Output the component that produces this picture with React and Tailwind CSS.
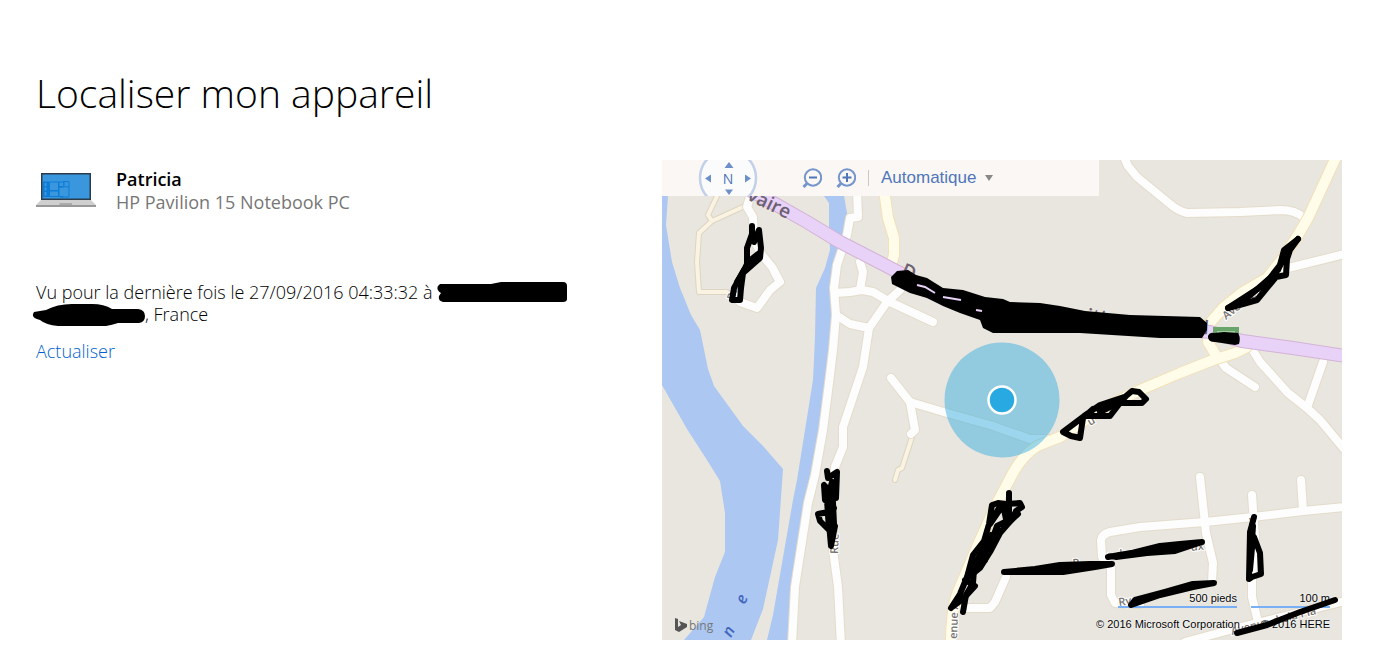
import { useState } from 'react';

const WHITE_ROADS = [
  'M857 190 L858 217 L850 218 L847 235 L837 265 L834 288 L836 315 L833 350 L829 383 L823 430 L815 475 L808 503 L795 587 L792 645',
  'M860 262 L863 272 L860 290',
  'M835 293 L850 292 L862 290 L873 292 L890 302 L933 322',
  'M900 290 L887 302 L869 328',
  'M836 315 L850 324 L869 328 L863 367 L852 400 L843 427 L843 447 L835 467 L832 500 L833 550 L838 587 L841 645',
  'M752 190 L747 207 L753 217 L754 240 L762 255 L772 267 L780 282 L770 290 L757 308 L740 302 L734 296',
  'M1123 155 L1128 166 L1137 177 L1170 204 Q1178 211 1187 213 L1240 212 L1280 210 Q1296 210 1304 218',
  'M1284 269 L1345 254',
  'M1252 349 L1260 362 L1288 393 L1307 408 L1320 420 L1345 450',
  'M1307 408 L1323 362',
  'M1220 360 L1226 368 L1255 387',
  'M891 378 L910 402 L947 413 L990 425 L1030 439 L1056 439',
  'M910 402 L915 430 L911 434',
  'M1140 604 L1115 603 L1111 595 L1111 567 L1102 557 L1101 540 Q1102 534 1110 532 L1140 527 L1205 522 L1253 517 L1303 511 L1345 507',
  'M1200 477 L1206 533 L1213 563 L1212 582',
  'M1252 495 L1255 537 L1252 580 L1252 597 L1258 622',
  'M1301 480 L1303 510',
  'M1185 642 L1237 628 L1345 601',
  'M963 608 L990 608 L995 602 L1006 577',
];

const LANES = [
  'M720 190 L708 215 L712 221 L745 206',
  'M712 221 L699 233 L697 262 L699 292 L727 292',
  'M912 437 L902 468 L898 470 L895 480',
];

const YELLOW_ROADS = [
  'M879 155 L888 218 L894 238 L894 255 L891 266',
  'M1337 155 L1320 192 L1308 218 L1298 235 L1283 258 L1267 278 L1243 292 L1223 308 L1210 323 L1208 342 L1217 357',
  'M1247 347 L1235 353 L1213 360 L1180 373 L1140 390 L1100 410 L1060 437 L1037 446 Q1023 455 1013 473 L997 503 L980 540 L960 587 Q951 604 951 645',
];

const MOTORWAY =
  'M735 182 L777 205 L807 222 L840 242 L873 259 L900 273 L930 292 L985 313 L1100 322 L1210 332 L1242 341 L1293 348 L1345 356';

// marker strokes drawn over the street names
const MARKS = [
  'M752 226 L752 234 L747 248 L747 264 L742 274 L734 288 L732 300 L740 300 L741 288 L743 273 L760 258 L761 248 L759 230 L754 242',
  'M748 262 L758 254 M744 270 L737 282',
  'M1298 239 L1284 250 L1280 265 L1270 278 L1247 298 L1228 308',
  'M1298 239 L1290 250 L1287 259 L1286 275 L1276 277 L1266 289 L1257 300 L1243 304 L1228 308 L1262 286 L1278 270 L1285 254',
  'M1083 417 L1063 432 L1071 436 L1080 438 L1083 418 L1093 409 L1120 403 L1126 396 L1132 391 L1139 392 L1146 399 L1142 403 L1120 403 L1110 416 L1084 416 L1100 405 L1124 397',
  'M1100 412 L1114 405',
  'M827 471 L828 478 L837 472 L836 498 L824 485 L825 500 L834 508 L830 522 L835 526 L831 546 L828 512 L818 514 L820 521 L829 530 L827 500 L832 482 L834 524',
  'M1009 493 L1009 520 L997 526 L992 540 L984 557 L974 570 L973 583 L966 595 L963 612',
  'M951 608 L960 594 L967 577 L973 555 L984 541 L989 524 L992 505 L998 503 L1006 504 L1020 503 L1022 507 L1016 511 L1013 518 L1000 533 L990 552 L980 568 L965 580 L975 586 L964 598 L952 607',
  'M1000 506 L990 524 L1003 505 L1007 524 L1018 514 M991 535 L976 562 L970 576 M998 530 L978 558 M987 545 L985 560',
  'M1108 557 L1160 548 L1202 542 L1175 551 L1147 553 L1116 557 L1160 546 L1180 544 L1202 542',
  'M1254 517 L1250 532 L1249 579 L1252 577 L1261 574 L1260 553 L1254 537 L1252 548 L1250 570 L1253 526',
  'M1237 633 L1267 625 L1300 612 L1335 600',
];

const Redaction = ({ d, viewBox, className }) => (
  <svg viewBox={viewBox} className={className} aria-hidden="true">
    <path d={d} fill="#000" />
  </svg>
);

const Laptop = () => (
  <svg viewBox="0 0 60 35" className="h-[35px] w-[60px] shrink-0" aria-hidden="true">
    <path d="M5 0h50v27H5z" fill="#2b3d4c" />
    <path d="M6.500 1.500h47v24h-47z" fill="#3a96dd" />
    <path d="M7 8.500h20.500V24H7z" fill="#0d7cd6" />
    <path d="M8.500 10h2v3h-2zM8.500 14.500h2v3h-2zM8.500 19h2v3.500h-2zM14 9.500h8V17h-8zM14 18.500h8V23h-8zM23.500 9.500h3.500V13h-3.500zM28.500 9.500h4V13h-4zM23.500 14.500H32V23h-8.500z" fill="#3a96dd" />
    <path d="M27 8.500h6V24h-9M28 9v4M23 13.800h10" stroke="#0d7cd6" fill="none" />
    <path d="M5 27h50l5 5H0z" fill="#cfcfcf" />
    <path d="M24 30h12v2H23z" fill="#aaa" />
    <path d="M0 32h60v2H0z" fill="#999" />
  </svg>
);

const Compass = () => (
  <svg viewBox="0 0 60 36" className="h-9 w-[60px]" aria-hidden="true">
    <circle cx="30" cy="18" r="28" fill="#fcfbfb" stroke="#c2d0ea" strokeWidth="2.500" />
    <path d="M31 2l4.500 6h-9zM31 35l-4-5.500h8zM7 18.500l6-4v8zM53 18.500l-6-4v8z" fill="#6d8fca" />
    <text x="30" y="24" textAnchor="middle" fontSize="14" fontFamily="'Open Sans', sans-serif" fill="#4c72b8">N</text>
  </svg>
);

const ZoomIcon = ({ plus }) => (
  <svg viewBox="0 0 20 20" className="size-5" fill="none" stroke="#7596cc" strokeWidth="2" aria-hidden="true">
    <circle cx="11" cy="9.500" r="8.200" />
    <path d="M5 15.500L1.500 19" strokeWidth="3" />
    <path d={plus ? 'M6.500 9.500h9M11 5v9' : 'M7 9.500h8'} stroke="#4f76ba" />
  </svg>
);

const Roads = ({ paths, casing, fill, width }) => (
  <g fill="none" strokeLinecap="round" strokeLinejoin="round">
    {paths.map((d) => (
      <path key={d} d={d} stroke={casing} strokeWidth={width + 2} />
    ))}
    {paths.map((d) => (
      <path key={d} d={d} stroke={fill} strokeWidth={width} />
    ))}
  </g>
);

const StreetMap = () => (
  <svg viewBox="662 160 680 480" preserveAspectRatio="xMidYMid slice" className="absolute inset-0 size-full" role="img" aria-label="Carte">
    <path d="M662 160h680v480H662z" fill="#e8e6df" />
    <g fill="#abc7f2">
      <path d="M662 160H672L668 196L666 225L672 262L680 288L691 315L700 330L708 369L714 386L743 426L763 446L783 469L778 540L763 609L751 640H684L704 617L715 577L725 552V513L720 481L707 460L687 429L662 385z" />
      <path d="M820 160L824 196L829 203V232L830 250L825 268L816 288L815 337L813 380L797 480L793 500L773 615L767 640H788L791 593L803 523L811 480L820 433L828 360L831 333L832 282L836 258L845 235L847 213L843 190V160z" />
    </g>
    <Roads paths={LANES} casing="#ddd5c3" fill="#faf3e2" width={4} />
    <Roads paths={WHITE_ROADS} casing="#e4dccb" fill="#fdfdfd" width={8} />
    <Roads paths={YELLOW_ROADS} casing="#f2e1b8" fill="#fffdea" width={10} />
    <Roads paths={[MOTORWAY]} casing="#d3b3d5" fill="#e8d2f8" width={12} />

    <g fontFamily="'Open Sans', sans-serif" fill="#77736f" stroke="#fff" strokeWidth="2" paintOrder="stroke" fontSize="11" fontWeight="600">
      <g fontSize="19" fill="#6c6072" stroke="none">
        <text transform="translate(746 199) rotate(26)">vaire</text>
        <text transform="translate(900 275) rotate(23)">D</text>
        <text transform="translate(1087 322) rotate(5)">itt</text>
        <text transform="translate(1203 334) rotate(5)">l</text>
      </g>
      <text transform="translate(734 301) rotate(-72)">Ru</text>
      <text transform="translate(838 554) rotate(-88)">Rue</text>
      <text transform="translate(1226 320) rotate(-38)">Avenue d</text>
      <text transform="translate(1090 426) rotate(-30)">u</text>
      <text transform="translate(957 639) rotate(-88)">enue A</text>
      <text transform="translate(1073 567) rotate(-6)">R</text>
      <text transform="translate(1107 559) rotate(-6)">e des</text>
      <text transform="translate(1191 551) rotate(-6)">ux</text>
      <text transform="translate(1119 606) rotate(-8)">Ry</text>
      <text transform="translate(1249 524)">y</text>
      <text transform="translate(1232 635) rotate(-14)">Avenue de la Pla</text>
    </g>
    <g fontFamily="'Open Sans', sans-serif" fontStyle="italic" fontWeight="600" fontSize="16" fill="#4366bd">
      <text transform="translate(745 605) rotate(-68)">e</text>
      <text transform="translate(731 638) rotate(-62)">n</text>
    </g>

    <rect x="1213" y="327" width="26" height="13" fill="#69a56b" />
    <path d="M1217 332h18" stroke="#d9ecd9" />

    <circle cx="1002" cy="400" r="57.500" fill="#3cb0e0" fillOpacity="0.500" />
    <circle cx="1002" cy="400" r="13.500" fill="#29a9e2" stroke="#fff" strokeWidth="2.500" />

    <g aria-hidden="true">
      <path d="M675 618l3 1v8l3-2-2-4 8 3v3l-8 5-4-2z" fill="#555" />
      <text x="689" y="630" fontSize="12" fontFamily="'Open Sans', sans-serif" fill="#777">bing</text>
    </g>
  </svg>
);

const MarkerLayer = () => (
  <svg viewBox="662 160 680 480" preserveAspectRatio="xMidYMid slice" className="pointer-events-none absolute inset-0 size-full" aria-hidden="true">
    <path d="M891 277L897 271L908 270L916 275L927 278L943 288L963 290L985 297L1003 299L1010 302L1040 303L1060 306L1085 311L1130 315L1200 317L1207 323V330L1202 338H1160L1080 333H993L983 328L980 320L960 313L943 306L927 298L910 293L900 288L892 284z" />
    <path d="M917 285l8 2 10 6M943 297l18 3M976 310l6 1" stroke="#e8d2f8" strokeWidth="2" fill="none" />
    <path d="M1208 336q2-4 6-3l10-1 14 1q3 5 1 11l-4 1-20-3q-7 0-7-5z" />
    <g fill="none" stroke="#000" strokeWidth="6" strokeLinecap="round" strokeLinejoin="round">
      {MARKS.map((d) => (
        <path key={d} d={d} />
      ))}
      <path d="M1004 572L1035 569L1060 565L1090 564L1112 564L1095 567L1063 572z" fill="#000" />
      <path d="M1131 605L1135 600L1165 592L1193 584L1214 583L1193 587L1160 595z" fill="#000" />
    </g>
  </svg>
);

const MapToolbar = () => {
  const [view, setView] = useState('auto');

  return (
    <div className="absolute left-0 top-0 flex h-9 w-[437px] items-center bg-[#faf7f5] pl-9">
      <button type="button" aria-label="Nord" className="h-9">
        <Compass />
      </button>
      <div className="ml-11 flex items-center gap-[14px]">
        <button type="button" aria-label="Zoom arrière"><ZoomIcon /></button>
        <button type="button" aria-label="Zoom avant"><ZoomIcon plus /></button>
      </div>
      <span className="ml-3 h-4 w-px bg-[#c8c8c8]" />
      <div className="ml-3 flex items-center gap-2">
        <select
          aria-label="Affichage"
          value={view}
          onChange={(e) => setView(e.target.value)}
          className="h-9 appearance-none bg-transparent font-['Liberation_Sans',sans-serif] text-[17px] leading-9 text-[#4f76ba]"
        >
          <option value="auto">Automatique</option>
        </select>
        <svg viewBox="0 0 8 6" className="h-[6px] w-2" aria-hidden="true">
          <path d="M0 0h8L4 6z" fill="#888" />
        </svg>
      </div>
    </div>
  );
};

const MapLegend = () => (
  <div className="absolute bottom-2 right-3 w-[234px] font-['Liberation_Sans',sans-serif] text-[11px] leading-4 text-black [text-shadow:0_0_1px_#fff,0_0_2px_#fff]">
    <div className="flex justify-end gap-[14px] text-right">
      <div className="w-[119px] border-b-2 border-[#78aff5]">500 pieds</div>
      <div className="w-[79px] border-b-2 border-[#78aff5]">100 m</div>
    </div>
    <div className="mt-2 flex justify-between whitespace-nowrap">
      <span>© 2016 Microsoft Corporation</span>
      <span>© 2016 HERE</span>
    </div>
  </div>
);

const App = () => {
  return (
    <main className="bg-white pb-3 pl-9 pr-[45px] pt-[66px] font-['Open_Sans',sans-serif] text-[18px] leading-[22px] text-black">
      <h1 className="text-[39px] font-light leading-[54px]">Localiser mon appareil</h1>

      <div className="mt-10 grid grid-cols-[626fr_680fr]">
        <section>
          <div className="flex gap-5 pt-2">
            <div className="pt-[5px]">
              <Laptop />
            </div>
            <div className="leading-[23px]">
              <h2 className="font-semibold">Patricia</h2>
              <p className="text-[#777]">HP Pavilion 15 Notebook PC</p>
            </div>
          </div>

          <p className="mt-[67px] whitespace-nowrap font-light">
            Vu pour la dernière fois le 27/09/2016 04:33:32 à{' '}
            <Redaction
              viewBox="0 0 130 22"
              className="-my-1 inline-block h-[22px] w-[130px] align-baseline"
              d="M3 3L54 3L64 1H126Q130 1 130 5V18Q130 21 126 21H6Q1 20 2 15L4 12Q-1 9 1 5z"
            />
            <br />
            <Redaction
              viewBox="0 0 113 24"
              className="-mb-[6px] -ml-1 -mt-1 inline-block h-6 w-[113px] align-baseline"
              d="M2 9L14 7Q25 1 40 1H60Q72 1 80 6H106Q113 7 113 13T107 20H86Q80 22 74 23H26Q14 22 8 17Q-2 15 2 9z"
            />
            , France
          </p>

          <a href="#actualiser" className="mt-[15px] inline-block font-light text-[#005fd0]">Actualiser</a>
        </section>

        <section className="relative h-[480px] overflow-hidden">
          <StreetMap />
          <MapToolbar />
          <MapLegend />
          <MarkerLayer />
        </section>
      </div>
    </main>
  );
};

export default App;
